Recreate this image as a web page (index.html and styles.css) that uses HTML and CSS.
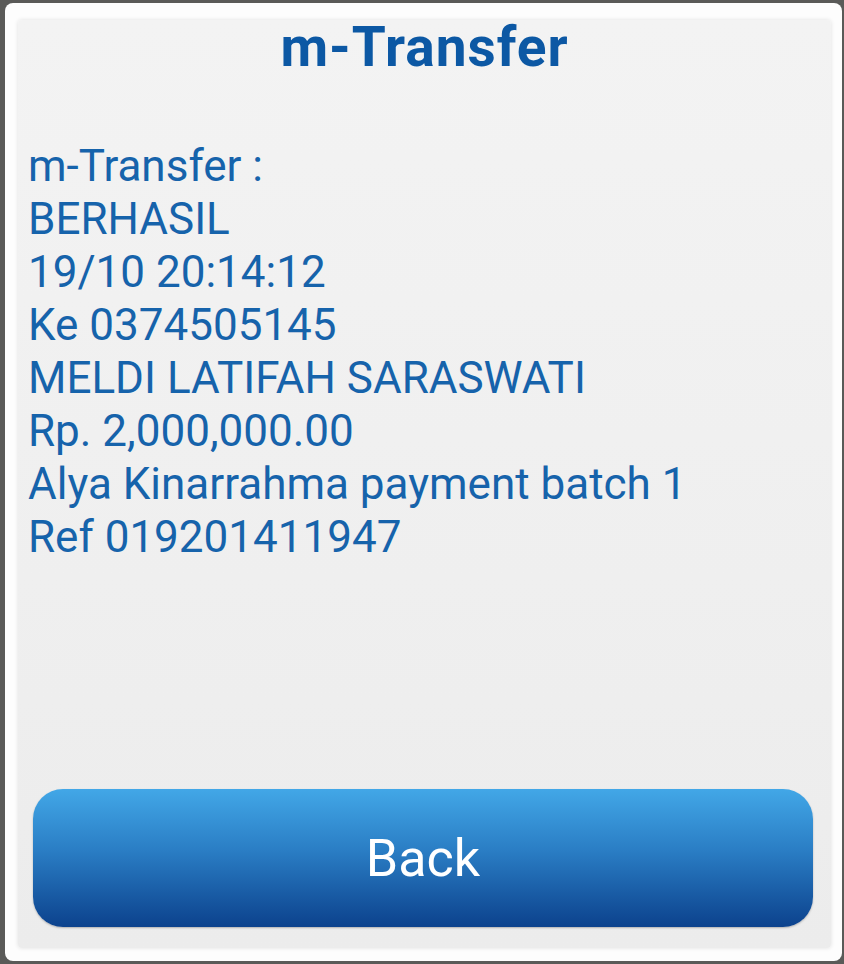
FILE: index.html
```html
<!DOCTYPE html>
<html lang="id">
<head>
<meta charset="utf-8">
<title>m-Transfer</title>
<link rel="stylesheet" href="styles.css">
</head>
<body>
<div class="backdrop">
  <div class="dialog">
    <div class="panel">
      <h1 class="title">m-Transfer</h1>
      <div class="message">
        <div class="line">m-Transfer :</div>
        <div class="line">BERHASIL</div>
        <div class="line">19/10 20:14:12</div>
        <div class="line">Ke 0374505145</div>
        <div class="line">MELDI LATIFAH SARASWATI</div>
        <div class="line">Rp. 2,000,000.00</div>
        <div class="line">Alya Kinarrahma payment batch 1</div>
        <div class="line">Ref 019201411947</div>
      </div>
      <div class="actions">
        <button class="back-btn">Back</button>
      </div>
    </div>
  </div>
</div>
</body>
</html>
```
FILE: styles.css
```css
html, body {
  margin: 0;
  padding: 0;
  height: 100%;
}
body {
  background: #5a5a58;
  font-family: Roboto, "Noto Sans", sans-serif;
}
.backdrop {
  height: 964px;
  padding: 3px 2px 3px 5px;
  box-sizing: border-box;
  display: flex;
}
.dialog {
  flex: 1;
  background: #fdfdfd;
  border-radius: 8px;
  padding: 17px 11px 13px 13px;
  display: flex;
}
.panel {
  flex: 1;
  background: linear-gradient(180deg, #f3f3f3 0%, #efefef 60%, #ececec 100%);
  border-radius: 4px;
  box-shadow: 0 0 4px rgba(0,0,0,0.12);
  display: flex;
  flex-direction: column;
}
.title {
  margin: 0;
  padding-top: 0;
  text-align: center;
  font-size: 55px;
  font-weight: 700;
  letter-spacing: 1px;
  line-height: 54px;
  color: #0c58a4;
}
.message {
  margin-top: 66px;
  padding-left: 10px;
  font-size: 44px;
  line-height: 53px;
  color: #1663ab;
}
.actions {
  margin-top: auto;
  padding: 0 18px 21px 15px;
}
.back-btn {
  display: block;
  width: 100%;
  height: 138px;
  border: none;
  border-radius: 30px;
  background: linear-gradient(180deg, #42a7e7 0%, #2a7dc4 45%, #0c428d 100%);
  color: #ffffff;
  font-family: Roboto, "Noto Sans", sans-serif;
  font-size: 52px;
  box-shadow: 0 1px 2px rgba(0,0,0,0.25);
}
```
